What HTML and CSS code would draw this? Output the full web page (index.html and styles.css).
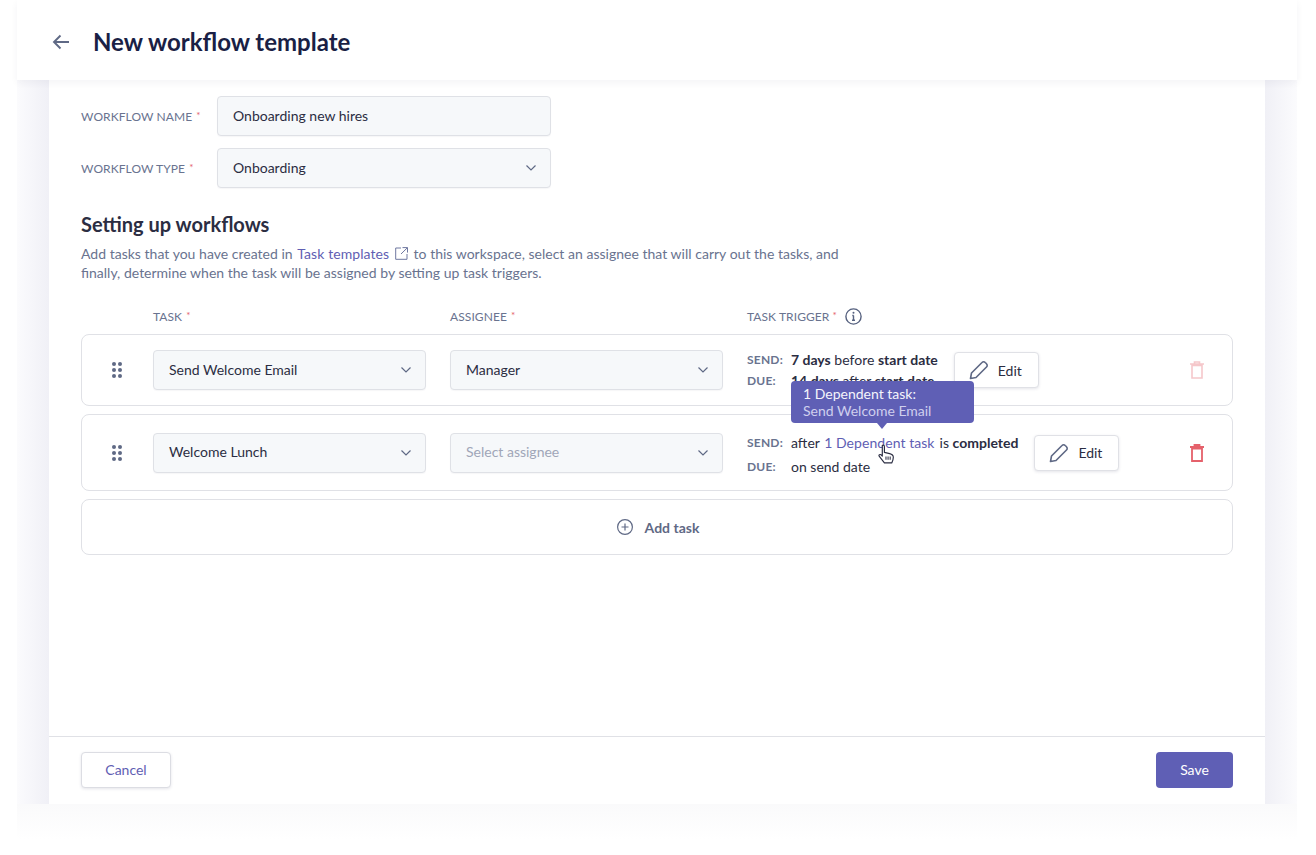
FILE: index.html
```html
<!DOCTYPE html>
<html lang="en">
<head>
<meta charset="utf-8">
<title>New workflow template</title>
<link rel="stylesheet" href="styles.css">
</head>
<body>
<div class="stage">
  <header class="topbar">
    <svg class="back" width="18" height="16" viewBox="0 0 18 16"><path d="M17 8H2M8.500 1.500 2 8l6.500 6.500" fill="none" stroke="#5f6985" stroke-width="1.900"/></svg>
    <h1 class="title">New workflow template</h1>
  </header>
  <main class="panel">
    <div class="content">
      <div class="field">
        <label class="label field-label">WORKFLOW NAME <span class="req">*</span></label>
        <div class="control wide"><span class="ctext">Onboarding new hires</span></div>
      </div>
      <div class="field">
        <label class="label field-label">WORKFLOW TYPE <span class="req">*</span></label>
        <div class="control wide"><span class="ctext">Onboarding</span>
          <svg class="chev" width="10" height="6" viewBox="0 0 10 6"><path d="M.5.500 5 5 9.500.500" fill="none" stroke="#5f6985" stroke-width="1.200"/></svg>
        </div>
      </div>
      <h2 class="heading">Setting up workflows</h2>
      <p class="desc">Add tasks that you have created in <a class="link link-tpl">Task templates</a>
        <svg class="ext" width="13" height="13" viewBox="0 0 13 13"><path d="M6 1H.7v11.300H12V7M7.500.600h5v5M12.300.800 6 7" fill="none" stroke="#6f78a0" stroke-width="1"/></svg>
        to this workspace, select an assignee that will carry out the tasks, and<br>finally, determine when the task will be assigned by setting up task triggers.</p>
      <div class="cols">
        <span class="label col-task">TASK <span class="req">*</span></span>
        <span class="label col-assignee">ASSIGNEE <span class="req">*</span></span>
        <span class="label col-trigger"><span>TASK TRIGGER</span><span class="req req-trigger">*</span>
          <svg class="info" width="17" height="17" viewBox="0 0 17 17"><circle cx="8.500" cy="8.500" r="7.600" fill="none" stroke="#56617f" stroke-width="1.400"/><path d="M8.500 7.500v4.500M7 12.200h3M7.300 7.500h1.400" fill="none" stroke="#56617f" stroke-width="1.400"/><circle cx="8.500" cy="4.800" r="1" fill="#56617f"/></svg>
        </span>
      </div>
      <section class="row row-short">
        <svg class="grip" width="10" height="16" viewBox="0 0 10 16"><g fill="#5f6985"><circle cx="2" cy="2" r="2"/><circle cx="8" cy="2" r="2"/><circle cx="2" cy="8" r="2"/><circle cx="8" cy="8" r="2"/><circle cx="2" cy="14" r="2"/><circle cx="8" cy="14" r="2"/></g></svg>
        <div class="control select"><span class="ctext">Send Welcome Email</span>
          <svg class="chev" width="10" height="6" viewBox="0 0 10 6"><path d="M.5.500 5 5 9.500.500" fill="none" stroke="#5f6985" stroke-width="1.200"/></svg>
        </div>
        <div class="control select"><span class="ctext">Manager</span>
          <svg class="chev" width="10" height="6" viewBox="0 0 10 6"><path d="M.5.500 5 5 9.500.500" fill="none" stroke="#5f6985" stroke-width="1.200"/></svg>
        </div>
        <div class="trigger tight">
          <span class="tlabel">SEND:</span><span class="tval"><b>7 days</b> before <b>start date</b></span>
          <span class="tlabel">DUE:</span><span class="tval"><b>14 days</b> after <b>start date</b></span>
        </div>
        <button class="edit"><svg width="20" height="20" viewBox="0 0 20 20"><path d="M1.500 18.500l1-5.500L13 2.500a2.200 2.200 0 0 1 3.200 0l1.300 1.300a2.200 2.200 0 0 1 0 3.200L7 17.500z" fill="none" stroke="#5f6985" stroke-width="1.600" stroke-linejoin="round"/></svg>Edit</button>
        <svg class="trash faded" width="14" height="18" viewBox="0 0 14 18"><path d="M2 4.500h10V17H2zM0 3h14M4.500 3V1h5v2" fill="none" stroke="#e5616b" stroke-width="1.600"/></svg>
      </section>
      <section class="row row-tall">
        <div class="tooltip"><span class="tip-title">1 Dependent task:</span><span class="tip-sub">Send Welcome Email</span></div>
        <svg class="grip" width="10" height="16" viewBox="0 0 10 16"><g fill="#5f6985"><circle cx="2" cy="2" r="2"/><circle cx="8" cy="2" r="2"/><circle cx="2" cy="8" r="2"/><circle cx="8" cy="8" r="2"/><circle cx="2" cy="14" r="2"/><circle cx="8" cy="14" r="2"/></g></svg>
        <div class="control select"><span class="ctext">Welcome Lunch</span>
          <svg class="chev" width="10" height="6" viewBox="0 0 10 6"><path d="M.5.500 5 5 9.500.500" fill="none" stroke="#5f6985" stroke-width="1.200"/></svg>
        </div>
        <div class="control select placeholder"><span class="ctext">Select assignee</span>
          <svg class="chev" width="10" height="6" viewBox="0 0 10 6"><path d="M.5.500 5 5 9.500.500" fill="none" stroke="#5f6985" stroke-width="1.200"/></svg>
        </div>
        <div class="trigger loose">
          <span class="tlabel">SEND:</span><span class="tval">after <a class="link link-dep">1 Dependent task</a><span class="is">is</span> <b>completed</b></span>
          <span class="tlabel">DUE:</span><span class="tval">on send date</span>
        </div>
        <button class="edit"><svg width="20" height="20" viewBox="0 0 20 20"><path d="M1.500 18.500l1-5.500L13 2.500a2.200 2.200 0 0 1 3.200 0l1.300 1.300a2.200 2.200 0 0 1 0 3.200L7 17.500z" fill="none" stroke="#5f6985" stroke-width="1.600" stroke-linejoin="round"/></svg>Edit</button>
        <svg class="trash" width="14" height="18" viewBox="0 0 14 18"><path d="M2 4.500h10V17H2zM0 3h14M4.500 3V1h5v2" fill="none" stroke="#e5616b" stroke-width="1.800"/></svg>
        <svg class="cursor" width="17" height="21" viewBox="0 0 16 20"><path d="M4 1.500c1-.8 2-.3 2 1V8l5 1.200c2 .5 3.500 1.300 3.500 3.300 0 2-.5 3.500-1.500 5.500H6L1 11.500c-.6-1 .8-2 1.800-1.200L4 11.500z" fill="#fff" stroke="#2b2d42" stroke-width="1.100" stroke-linejoin="round"/><path d="M7.500 12v3M9.500 12v3M11.500 12v3" stroke="#2b2d42" stroke-width="1"/></svg>
      </section>
      <button class="add"><svg width="16" height="16" viewBox="0 0 16 16"><circle cx="8" cy="8" r="7.400" fill="none" stroke="#5f6985" stroke-width="1.200"/><path d="M8 4.500v7M4.500 8h7" stroke="#5f6985" stroke-width="1.200"/></svg>Add task</button>
    </div>
    <footer class="footer">
      <button class="btn cancel">Cancel</button>
      <button class="btn save">Save</button>
    </footer>
  </main>
</div>
<div class="glow"></div>
</body>
</html>
```
FILE: styles.css
```css
* { box-sizing: border-box; }
html, body { margin: 0; height: 855px; background: #fff; overflow: hidden; }
body { font-family: Lato, "Open Sans", sans-serif; color: #2b2d42; font-size: 14px; }
.stage {
  width: 1280px; height: 804px; margin-left: 17px;
  display: flex; flex-direction: column;
  background: linear-gradient(90deg, #fbfbfd 0, #f0f0f6 32px, #f0f0f6 1248px, #fbfbfd 100%);
}
.glow { width: 1280px; height: 36px; margin-left: 17px; background: linear-gradient(180deg, #fafafb, #fff); }
.topbar {
  height: 80px; background: #fff; display: flex; align-items: center; padding-left: 35px; flex: none;
  position: relative; z-index: 1; box-shadow: 0 3px 7px rgba(40, 45, 80, .05);
}
.back { margin: 4px 23px 0 0; }
.title { margin: 2px 0 0; font-size: 24px; font-weight: 700; color: #1a1f45; }
.panel { flex: 1; margin: 0 32px; background: #fff; display: flex; flex-direction: column; min-height: 0; }
.content { flex: 1; padding: 16px 32px 0; }
.label { font-size: 12px; color: #69738f; letter-spacing: .08px; }
.req { color: #e5616b; font-size: 10px; vertical-align: 2px; margin-left: 1px; }
.req-trigger { margin: 0 0 2px 3px; }
.field { display: flex; align-items: center; margin-bottom: 12px; }
.field-label { width: 136px; flex: none; }
.control {
  height: 40px; background: #f6f8fa; border: 1px solid #dfe1e6; border-radius: 4px;
  display: flex; align-items: center; justify-content: space-between;
  padding: 0 14px 0 15px; font-size: 14px; color: #2b2d42; box-shadow: 0 1px 1px rgba(40, 45, 80, .04);
}
.ctext { margin-bottom: 2px; }
.wide { width: 334px; }
.select { width: 273px; flex: none; margin-right: 24px; }
.placeholder { color: #a0a6b8; }
.heading { margin: 24px 0 0; font-size: 20px; line-height: 24px; font-weight: 700; color: #2b2d42; }
.desc { margin: 8px 0 0; font-size: 14px; line-height: 19px; color: #69738f; word-spacing: .1px; }
.link { color: #5f5eb3; }
.link-tpl { margin-left: 1px; letter-spacing: .07px; }
.link-dep { margin-left: 1px; letter-spacing: .06px; }
.is { margin-left: 5px; }
.ext { vertical-align: -1px; margin: 0 2px; }
.cols { display: flex; align-items: center; margin-top: 24px; height: 20px; padding-left: 72px; }
.col-task { width: 297px; }
.col-assignee { width: 297px; }
.col-trigger { display: flex; align-items: center; }
.info { margin-left: 8px; }
.row, .add { border: 1px solid #e0e1e6; border-radius: 8px; width: 1152px; background: #fff; }
.row { display: flex; align-items: center; position: relative; padding-left: 30px; padding-right: 28px; }
.row-short { height: 72px; margin-top: 8px; }
.row-tall { height: 77px; margin-top: 8px; }
.grip { margin-right: 31px; flex: none; }
.trigger { display: grid; grid-template-columns: 44px auto; align-items: center; margin-right: 16px; font-size: 14px; }
.tight { row-gap: 4px; line-height: 17px; }
.loose { row-gap: 7px; line-height: 17px; margin-top: 4px; }
.tlabel { font-size: 12px; font-weight: 700; color: #69738f; letter-spacing: .2px; }
.tval { white-space: nowrap; color: #2b2d42; }
.tval b { font-weight: 700; }
.edit {
  width: 85px; height: 36px; display: flex; align-items: center; justify-content: center; gap: 9px;
  background: #fff; border: 1px solid #e0e1e6; border-radius: 4px; font: 14px Lato, sans-serif; color: #2b2d42;
  box-shadow: 0 1px 3px rgba(40, 45, 80, .12); padding: 0 2px 0 0;
}
.trash { margin-left: auto; flex: none; }
.faded { opacity: .35; }
.tooltip {
  position: absolute; left: 709px; top: -34px; width: 183px; height: 42px; z-index: 2;
  background: #5f5fb5; border-radius: 4px; padding: 4px 12px; display: flex; flex-direction: column;
  font-size: 14px; line-height: 17px;
}
.tooltip::after {
  content: ""; position: absolute; left: 86px; bottom: -6px;
  border-left: 5px solid transparent; border-right: 5px solid transparent; border-top: 6px solid #5f5fb5;
}
.tip-title { color: #f4f4fb; }
.tip-sub { color: #cfcfee; }
.cursor { position: absolute; left: 796px; top: 29px; }
.add {
  display: flex; align-items: center; justify-content: center; gap: 12px; height: 56px; margin-top: 8px;
  font: 700 14px Lato, sans-serif; color: #5f6985; padding: 0 0 0 2px;
}
.footer {
  height: 68px; flex: none; border-top: 1px solid #e0e1e6; padding: 15px 32px 0;
  display: flex; justify-content: space-between; align-items: flex-start;
}
.btn { height: 36px; border-radius: 4px; font: 14px Lato, sans-serif; padding: 0 0 2px; }
.cancel { width: 90px; background: #fff; border: 1px solid #dcdde3; color: #5f5eb3; box-shadow: 0 1px 3px rgba(40, 45, 80, .12); }
.save { width: 77px; background: #5f5fb5; border: 0; color: #fff; }
```
